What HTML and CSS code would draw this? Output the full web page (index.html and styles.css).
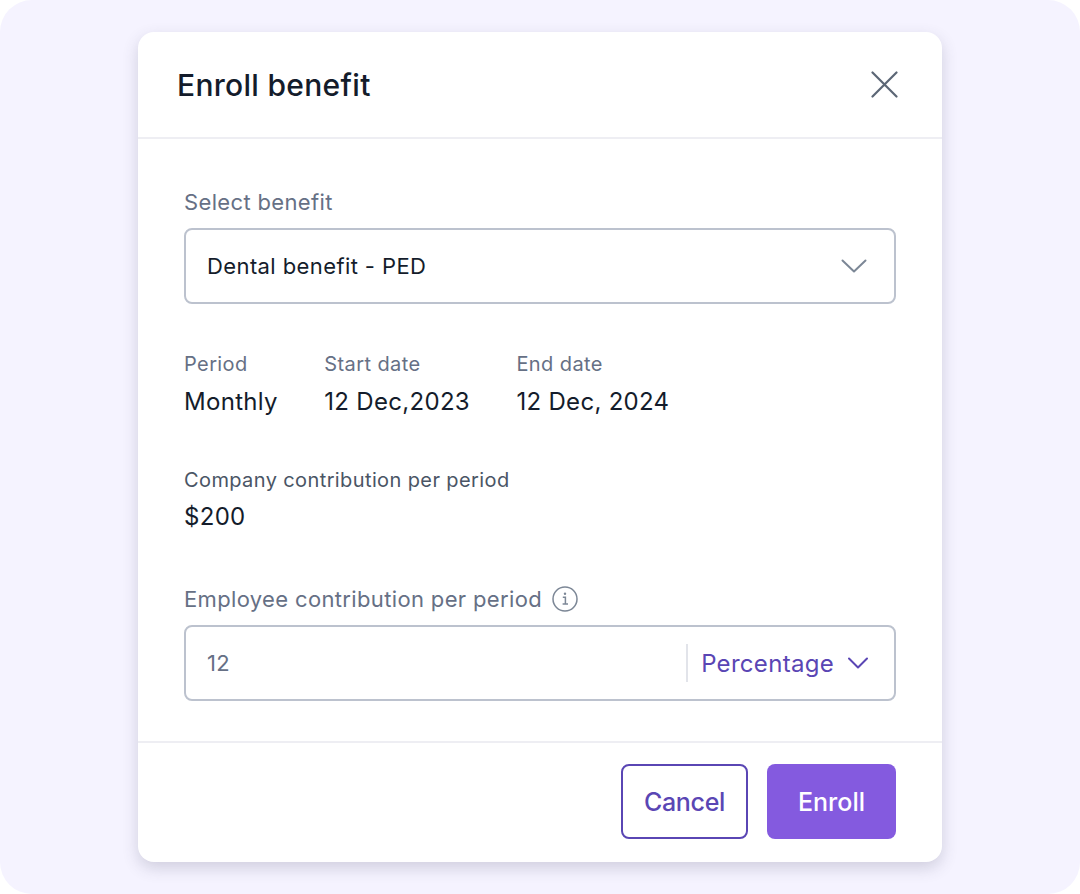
FILE: index.html

```html
<!DOCTYPE html>
<html>
<head>
  <meta charset="utf-8">
  <title>Enroll benefit</title>
  <link rel="stylesheet" href="styles.css">
</head>
<body>
  <div class="stage">
    <div class="modal">
      <div class="modal-head">
        <div class="modal-title">Enroll benefit</div>
        <svg class="close-icon" width="27" height="27" viewBox="0 0 27 27" fill="none"><path d="M1.5 1.5L25.5 25.5M25.5 1.5L1.5 25.5" stroke="#5B6675" stroke-width="2.2" stroke-linecap="round"/></svg>
      </div>
      <div class="modal-body">
        <div class="field-label first-label">Select benefit</div>
        <div class="select-box">
          <span>Dental benefit - PED</span>
          <svg width="26" height="14" viewBox="0 0 26 14" fill="none"><path d="M1.5 1.5L13 12.5L24.5 1.5" stroke="#7C8796" stroke-width="2" stroke-linecap="round" stroke-linejoin="round"/></svg>
        </div>
        <div class="details">
          <div class="detail">
            <div class="detail-label">Period</div>
            <div class="detail-value">Monthly</div>
          </div>
          <div class="detail">
            <div class="detail-label">Start date</div>
            <div class="detail-value">12 Dec,2023</div>
          </div>
          <div class="detail">
            <div class="detail-label">End date</div>
            <div class="detail-value">12 Dec, 2024</div>
          </div>
        </div>
        <div class="company">
          <div class="company-label">Company contribution per period</div>
          <div class="detail-value">$200</div>
        </div>
        <div class="field-label employee-label">
          Employee contribution per period
          <svg width="26" height="26" viewBox="0 0 26 26" fill="none"><circle cx="13" cy="13" r="12" stroke="#7C8796" stroke-width="1.5"/><path d="M10.8 11.2H13.4V18M10.6 18H16" stroke="#7C8796" stroke-width="1.5"/><circle cx="13" cy="7.8" r="1.2" fill="#7C8796"/></svg>
        </div>
        <div class="amount-box">
          <span class="amount">12</span>
          <div class="unit">
            <span>Percentage</span>
            <svg width="20" height="12" viewBox="0 0 20 12" fill="none"><path d="M1 1.5L10 10.5L19 1.5" stroke="#5A46B4" stroke-width="2" stroke-linecap="round" stroke-linejoin="round"/></svg>
          </div>
        </div>
      </div>
      <div class="modal-foot">
        <button class="btn btn-cancel">Cancel</button>
        <button class="btn btn-enroll">Enroll</button>
      </div>
    </div>
  </div>
</body>
</html>
```

FILE: styles.css

```css
html, body {
  margin: 0;
  background: #fff;
}
body {
  font-family: Inter, "Liberation Sans", sans-serif;
}
.stage {
  width: 1080px;
  height: 894px;
  box-sizing: border-box;
  padding-top: 32px;
  background: #F5F3FF;
  border-radius: 32px;
  display: flex;
  justify-content: center;
  align-items: flex-start;
}
.modal {
  width: 804px;
  height: 830px;
  background: #fff;
  border-radius: 16px;
  box-shadow: 0 6px 16px rgba(60, 60, 90, 0.2);
  display: flex;
  flex-direction: column;
}
.modal-head {
  height: 107px;
  box-sizing: border-box;
  padding: 0 44px 0 39px;
  border-bottom: 2px solid #EEEEF3;
  display: flex;
  justify-content: space-between;
  align-items: center;
  flex-shrink: 0;
}
.modal-title {
  font-size: 30px;
  font-weight: 500;
  letter-spacing: 0.3px;
  color: #141C2B;
}
.modal-body {
  flex: 1;
  padding: 0 46px;
}
.field-label {
  font-size: 22px;
  line-height: 30px;
  letter-spacing: 0.35px;
  color: #667085;
}
.first-label {
  margin-top: 48px;
}
.select-box, .amount-box {
  height: 76px;
  box-sizing: border-box;
  margin-top: 11px;
  border: 2px solid #BCC2CE;
  border-radius: 8px;
  display: flex;
  align-items: center;
  justify-content: space-between;
  font-size: 22px;
  letter-spacing: 0.4px;
}
.select-box {
  padding: 0 27px 0 21px;
  color: #141C2B;
}
.details {
  display: flex;
  gap: 46.5px;
  margin-top: 46px;
}
.detail-label {
  font-size: 20px;
  line-height: 28px;
  letter-spacing: 0.4px;
  color: #667085;
}
.detail-value {
  font-size: 24px;
  line-height: 32px;
  letter-spacing: 0.3px;
  margin-top: 8px;
  color: #141C2B;
}
.company {
  margin-top: 48px;
}
.company .detail-value {
  margin-top: 7px;
}
.company-label {
  font-size: 20px;
  line-height: 28px;
  letter-spacing: 0.39px;
  color: #4A5565;
}
.employee-label {
  margin-top: 51px;
  display: flex;
  align-items: center;
  gap: 10px;
}
.amount-box {
  padding: 0 26px 0 21px;
}
.amount {
  color: #667085;
}
.unit {
  display: flex;
  align-items: center;
  gap: 14px;
  height: 38px;
  padding-left: 13px;
  border-left: 2px solid #E2E4EA;
  font-size: 24px;
  letter-spacing: 0.3px;
  color: #5A46B4;
}
.modal-foot {
  height: 121px;
  box-sizing: border-box;
  border-top: 2px solid #EEEEF3;
  padding: 21px 46px 0 0;
  display: flex;
  justify-content: flex-end;
  gap: 19px;
  flex-shrink: 0;
}
.btn {
  height: 75px;
  border-radius: 8px;
  font-family: inherit;
  font-size: 25px;
  font-weight: 500;
}
.btn-cancel {
  width: 127px;
  background: #fff;
  border: 2px solid #5A46B4;
  color: #5A46B4;
  letter-spacing: -0.3px;
}
.btn-enroll {
  width: 129px;
  background: #845ADF;
  border: none;
  color: #fff;
}
```
